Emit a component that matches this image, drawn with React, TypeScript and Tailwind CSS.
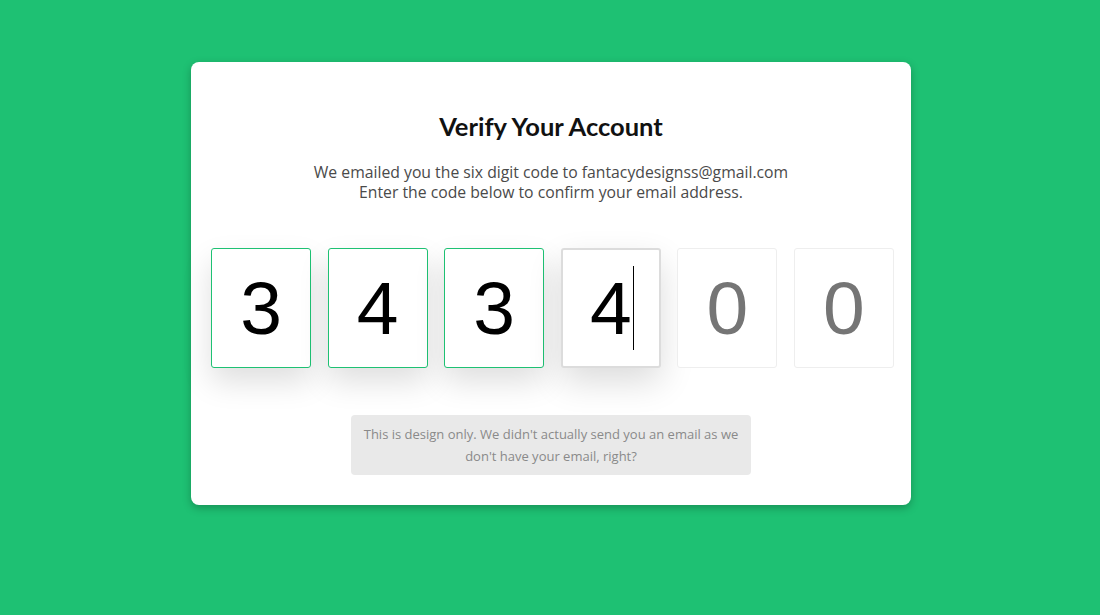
export default function App() {
  const digits = ['3', '4', '3', '4', '', ''];
  return (
    <div className="min-h-screen w-full bg-[#1ec173] flex justify-center pt-[62px] pl-[2px]" style={{ fontFamily: '"Open Sans", sans-serif' }}>
      <div className="w-[720px] h-[443px] bg-white rounded-lg shadow-[0_3px_8px_rgba(0,0,0,0.25)] px-5 pt-12 pb-[30px] flex flex-col items-center">
        <h1 className="text-[25.5px] leading-8 font-bold text-[#111]" style={{ fontFamily: 'Lato, sans-serif' }}>
          Verify Your Account
        </h1>
        <p className="mt-5 text-[15.75px] leading-5 text-[#4a4a4a] text-center">
          We emailed you the six digit code to fantacydesignss@gmail.com
          <br />
          Enter the code below to confirm your email address.
        </p>
        <div className="mt-[46px] w-[683px] self-start flex justify-between">
          {digits.map((d, i) => {
            const filled = d !== '';
            const focused = i === 3;
            let cls = 'border border-[#eee]';
            if (filled && !focused) cls = 'border border-[#1ec173] shadow-[0_14px_30px_rgba(0,0,0,0.13)]';
            if (focused) cls = 'border-2 border-[#dcdcdc] shadow-[0_14px_34px_rgba(0,0,0,0.14)]';
            return (
              <div
                key={i}
                className={`w-[100px] h-[120px] rounded-[3px] bg-white flex items-center justify-center text-[75px] ${cls}`}
                style={{ fontFamily: '"Liberation Sans", Arial, sans-serif' }}
              >
                {filled ? (
                  <span className="relative text-black leading-none">
                    {d}
                    {focused && <span className="absolute left-full top-[-5px] ml-[1px] w-px h-[84px] bg-black" />}
                  </span>
                ) : (
                  <span className="text-[#757575] leading-none">0</span>
                )}
              </div>
            );
          })}
        </div>
        <div className="mt-[47px] w-[400px] h-[60px] bg-[#e9e9e9] rounded-[4px] flex items-center justify-center px-2">
          <p className="text-[13px] leading-[22px] text-[#8a8a8a] text-center">
            This is design only. We didn't actually send you an email as we don't have your email, right?
          </p>
        </div>
      </div>
    </div>
  );
}
